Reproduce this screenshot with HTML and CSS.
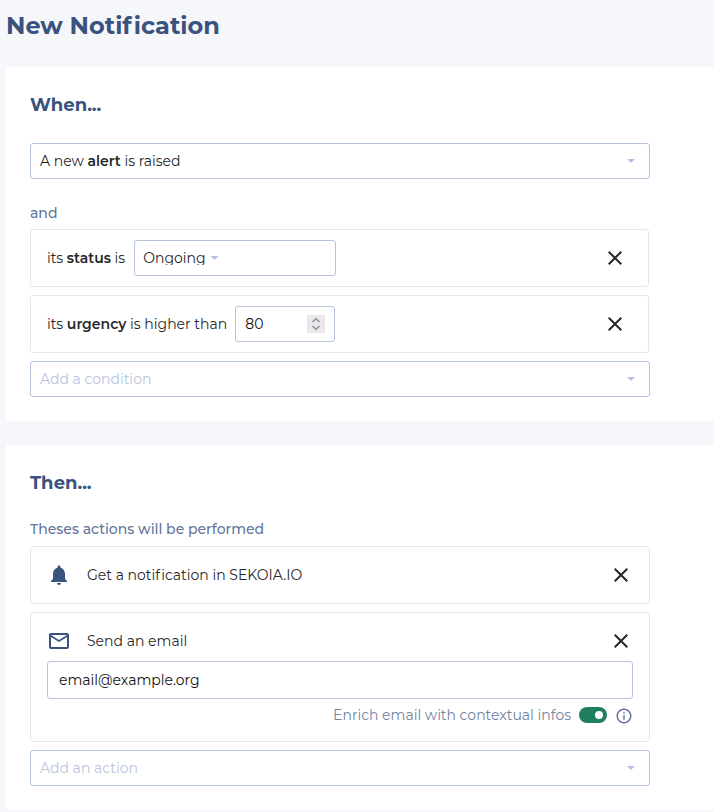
FILE: index.html
```
<!DOCTYPE html>
<html lang="en">
<head>
<meta charset="utf-8">
<title>New Notification</title>
<link rel="stylesheet" href="styles.css">
</head>
<body>
<svg class="defs" width="0" height="0" aria-hidden="true">
  <symbol id="close" viewBox="0 0 24 24"><path d="M19 6.41 17.59 5 12 10.59 6.41 5 5 6.41 10.59 12 5 17.59 6.41 19 12 13.41 17.59 19 19 17.59 13.41 12z"/></symbol>
</svg>
<h1 class="page-title">New Noti<span class="loose">f</span>ication</h1>

<section class="panel">
  <h2 class="panel-title">When...</h2>
  <div class="select"><span>A new <strong>alert</strong> is raised</span><i class="caret"></i></div>
  <div class="label label-when">and</div>
  <div class="row row-when">
    <span>its <strong>status</strong> is</span>
    <div class="field status"><span class="status-value">Ongoing</span><i class="caret"></i></div>
    <svg class="close"><use href="#close"/></svg>
  </div>
  <div class="row row-when">
    <span>its <strong>urgency</strong> is higher than</span>
    <div class="field number"><span>80</span>
      <svg class="spinner" viewBox="0 0 18 18"><path d="M5.5 7 9 3.8 12.5 7M5.5 11 9 14.2 12.5 11"/></svg>
    </div>
    <svg class="close"><use href="#close"/></svg>
  </div>
  <div class="select placeholder"><span>Add a condition</span><i class="caret"></i></div>
</section>

<section class="panel">
  <h2 class="panel-title">Then...</h2>
  <div class="label label-then">Theses actions will be performed</div>
  <div class="row">
    <svg class="icon" viewBox="0 0 24 24"><path d="M12 22c1.1 0 2-.9 2-2h-4c0 1.100.89 2 2 2zm6-6v-5c0-3.070-1.640-5.640-4.500-6.320V4c0-.83-.67-1.500-1.500-1.500s-1.500.67-1.500 1.500v.68C7.630 5.360 6 7.920 6 11v5l-2 2v1h16v-1l-2-2z"/></svg>
    <span>Get a noti<span class="loose">f</span>ication in SEKOIA.IO</span>
    <svg class="close"><use href="#close"/></svg>
  </div>
  <div class="action">
    <div class="action-head">
      <svg class="icon" viewBox="0 0 24 24"><path d="M22 6c0-1.100-.9-2-2-2H4c-1.100 0-2 .9-2 2v12c0 1.100.9 2 2 2h16c1.100 0 2-.9 2-2V6zm-2 0-8 5-8-5h16zm0 12H4V8l8 5 8-5v10z"/></svg>
      <span>Send an email</span>
      <svg class="close"><use href="#close"/></svg>
    </div>
    <div class="field email">email@example.org</div>
    <div class="enrich">
      <span>Enrich email with contextual infos</span>
      <span class="toggle"></span>
      <svg class="info" viewBox="0 0 24 24"><path d="M11 7h2v2h-2zm0 4h2v6h-2zm1-9C6.480 2 2 6.480 2 12s4.480 10 10 10 10-4.480 10-10S17.520 2 12 2zm0 18c-4.410 0-8-3.590-8-8s3.590-8 8-8 8 3.590 8 8-3.590 8-8 8z"/></svg>
    </div>
  </div>
  <div class="select placeholder"><span>Add an action</span><i class="caret"></i></div>
</section>
</body>
</html>
```
FILE: styles.css
```
* { box-sizing: border-box; }
body {
  margin: 0;
  padding: 8px 0 0 6px;
  background: #f5f7fb;
  color: #27272a;
  font: 400 14px/20px Montserrat, Inter, "Open Sans", sans-serif;
  font-variant-ligatures: none;
  overflow: hidden;
}
.defs { position: absolute; }
strong { font-weight: 600; }
.loose { letter-spacing: .085em; }
.page-title {
  margin: 0 0 23px;
  color: #3a527e;
  font-size: 24px;
  line-height: 36px;
  font-weight: 700;
}
.panel {
  margin-bottom: 24px;
  padding: 24px;
  background: #fff;
}
.panel-title {
  margin: 0;
  color: #3a527e;
  font-size: 18px;
  line-height: 28px;
  font-weight: 700;
}
.panel-title + .select { margin-top: 24px; }
.select, .field {
  display: flex;
  align-items: center;
  border: 1px solid #b4c2e0;
  border-radius: 3px;
  background: #fff;
}
.select {
  justify-content: space-between;
  width: 620px;
  height: 36px;
  padding: 0 14px 0 9px;
}
.placeholder { color: #b9c4e0; }
.caret {
  width: 8px;
  height: 4px;
  background: #b4c2e0;
  clip-path: polygon(0 0, 100% 0, 50% 100%);
}
.label { color: #64759b; font-weight: 500; }
.label-when { margin: 24px 0 6px; }
.label-then { margin: 22px 0 7px; }
.row, .action {
  width: 620px;
  margin-bottom: 8px;
  border: 1px solid #e3e7f3;
  border-radius: 3px;
}
.row {
  display: flex;
  align-items: center;
  height: 58px;
  padding: 0 16px;
}
.row-when { width: 619px; padding-right: 21px; }
.close {
  width: 24px;
  height: 24px;
  margin-left: auto;
  fill: #27272a;
}
.field { height: 36px; }
.status { width: 202px; margin-left: 8.6px; padding-left: 8.4px; }
.status-value { height: 17px; line-height: 20px; overflow: hidden; margin: 0 5px 3px 0; }
.number {
  justify-content: space-between;
  width: 100px;
  margin-left: 8px;
  padding: 0 9px;
  color: #111;
}
.spinner {
  width: 18px;
  height: 18px;
  background: #e9e9ed;
  fill: none;
  stroke: #8f8f9d;
  stroke-width: 1.5;
}
.icon {
  width: 24px;
  height: 24px;
  margin-right: 16px;
  fill: #3a527e;
}
.action { height: 130px; padding: 16px; }
.action-head { display: flex; align-items: center; height: 24px; }
.email { height: 38px; margin-top: 8px; padding-left: 11px; color: #111; }
.enrich {
  display: flex;
  align-items: center;
  height: 20px;
  margin-top: 6px;
  justify-content: flex-end;
  color: #75839f;
}
.toggle {
  display: flex;
  align-items: center;
  justify-content: flex-end;
  width: 28px;
  height: 16px;
  margin: 0 8px;
  padding-right: 4px;
  border-radius: 8px;
  background: #217f5f;
}
.toggle::after {
  content: "";
  width: 8px;
  height: 8px;
  border-radius: 50%;
  background: #fff;
}
.info { width: 18px; height: 18px; margin-top: 2px; fill: #64759b; }
```
